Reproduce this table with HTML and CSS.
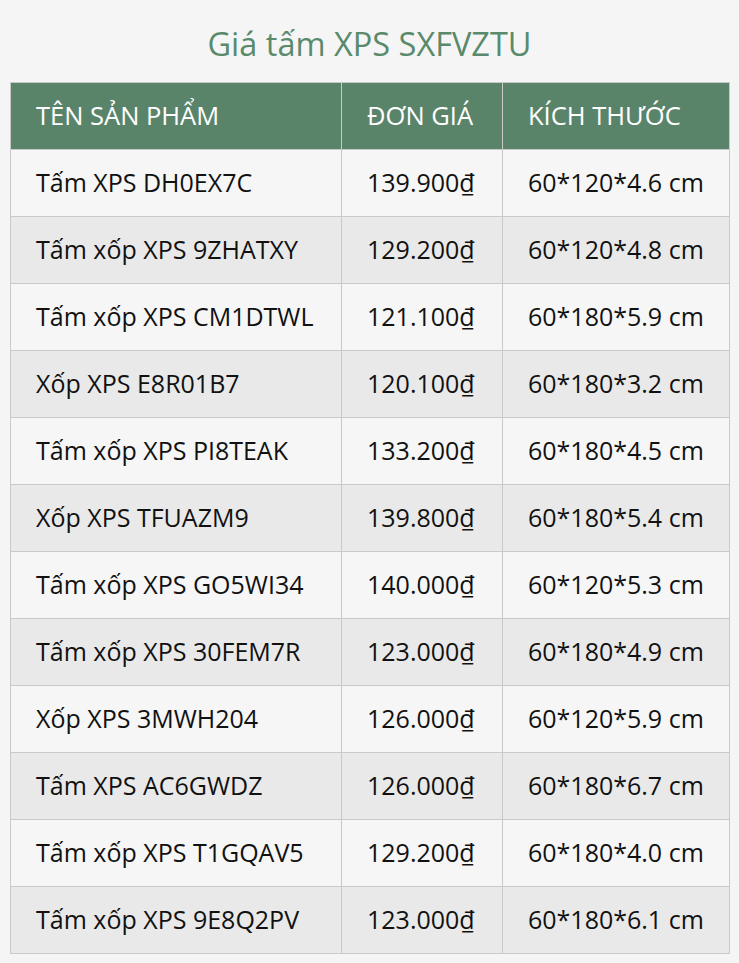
FILE: index.html
```html
<!DOCTYPE html>
<html lang="vi">
<head>
<meta charset="utf-8">
<link rel="stylesheet" href="styles.css">
</head>
<body>
<div class="wrap">
  <h1 class="title">Giá tấm XPS SXFVZTU</h1>
  <table class="price-table">
    <colgroup>
      <col class="c-name"><col class="c-price"><col class="c-size">
    </colgroup>
    <thead>
      <tr><th>TÊN SẢN PHẨM</th><th>ĐƠN GIÁ</th><th>KÍCH THƯỚC</th></tr>
    </thead>
    <tbody>
      <tr><td>Tấm XPS DH0EX7C</td><td>139.900₫</td><td>60*120*4.6 cm</td></tr>
      <tr><td>Tấm xốp XPS 9ZHATXY</td><td>129.200₫</td><td>60*120*4.8 cm</td></tr>
      <tr><td>Tấm xốp XPS CM1DTWL</td><td>121.100₫</td><td>60*180*5.9 cm</td></tr>
      <tr><td>Xốp XPS E8R01B7</td><td>120.100₫</td><td>60*180*3.2 cm</td></tr>
      <tr><td>Tấm xốp XPS PI8TEAK</td><td>133.200₫</td><td>60*180*4.5 cm</td></tr>
      <tr><td>Xốp XPS TFUAZM9</td><td>139.800₫</td><td>60*180*5.4 cm</td></tr>
      <tr><td>Tấm xốp XPS GO5WI34</td><td>140.000₫</td><td>60*120*5.3 cm</td></tr>
      <tr><td>Tấm xốp XPS 30FEM7R</td><td>123.000₫</td><td>60*180*4.9 cm</td></tr>
      <tr><td>Xốp XPS 3MWH204</td><td>126.000₫</td><td>60*120*5.9 cm</td></tr>
      <tr><td>Tấm XPS AC6GWDZ</td><td>126.000₫</td><td>60*180*6.7 cm</td></tr>
      <tr><td>Tấm xốp XPS T1GQAV5</td><td>129.200₫</td><td>60*180*4.0 cm</td></tr>
      <tr><td>Tấm xốp XPS 9E8Q2PV</td><td>123.000₫</td><td>60*180*6.1 cm</td></tr>
    </tbody>
  </table>
</div>
</body>
</html>
```
FILE: styles.css
```css
html, body {
  margin: 0;
  padding: 0;
  background: #f5f5f5;
}
body {
  font-family: "Open Sans", "Noto Sans", sans-serif;
  color: #111111;
}
.wrap {
  padding: 0 10px;
}
.title {
  margin: 0;
  height: 82px;
  box-sizing: border-box;
  padding-top: 23px;
  text-align: center;
  font-weight: 400;
  font-size: 32.5px;
  line-height: 42px;
  color: #5a8a6c;
}
.price-table {
  width: 719px;
  border-collapse: collapse;
  table-layout: fixed;
}
.c-name { width: 331px; }
.c-price { width: 161px; }
.c-size { width: 227px; }
.price-table th,
.price-table td {
  border: 1px solid #c9c9c9;
  height: 64px;
  padding: 0 0 2px 25px;
  text-align: left;
  vertical-align: middle;
  font-size: 25px;
  line-height: 34px;
  white-space: nowrap;
}
.price-table th {
  background: #5a846a;
  color: #ffffff;
  font-weight: 400;
  font-size: 25.5px;
}
.price-table tbody tr:nth-child(odd) td { background: #f6f6f6; }
.price-table tbody tr:nth-child(even) td { background: #e9e9e9; }
```
